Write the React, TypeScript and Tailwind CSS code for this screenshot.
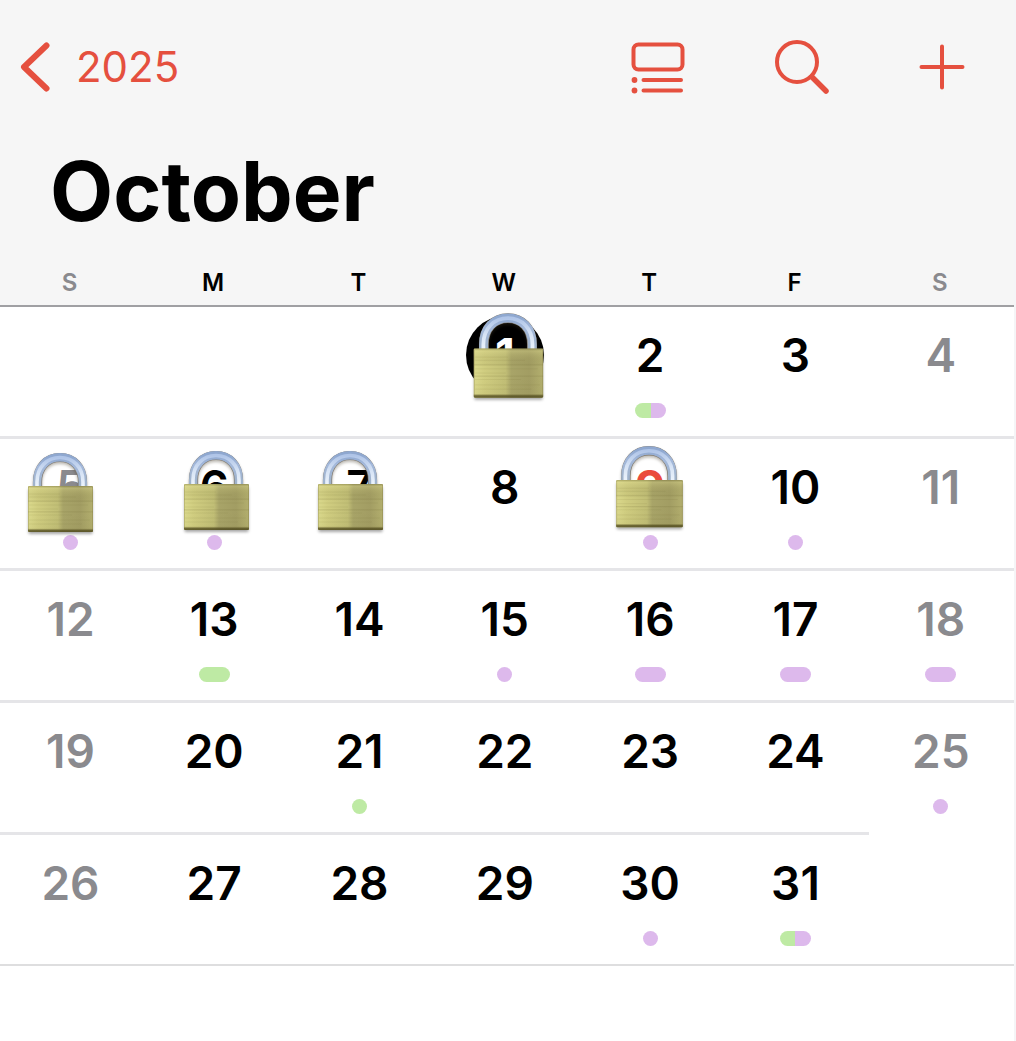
import { useId } from "react";

type Mark = "purple" | "green" | "purpleWide" | "greenWide" | "mixed";
type Day = { n: number; mark?: Mark; lock?: string; tone?: "selected" | "today" };

const weekdays = [
  { short: "S", name: "Sunday" },
  { short: "M", name: "Monday" },
  { short: "T", name: "Tuesday" },
  { short: "W", name: "Wednesday" },
  { short: "T", name: "Thursday" },
  { short: "F", name: "Friday" },
  { short: "S", name: "Saturday" },
];

const weeks: (Day | null)[][] = [
  [
    null,
    null,
    null,
    { n: 1, tone: "selected", lock: "top-[1px] ml-[4px] w-[79px]" },
    { n: 2, mark: "mixed" },
    { n: 3 },
    { n: 4 },
  ],
  [
    { n: 5, mark: "purple", lock: "top-[9px] ml-[-10px] w-[74px]" },
    { n: 6, mark: "purple", lock: "top-[7px] ml-[3px] w-[74px]" },
    { n: 7, lock: "top-[7px] ml-[-8px] w-[74px]" },
    { n: 8 },
    { n: 9, mark: "purple", tone: "today", lock: "top-[2px] w-[76px]" },
    { n: 10, mark: "purple" },
    { n: 11 },
  ],
  [
    { n: 12 },
    { n: 13, mark: "greenWide" },
    { n: 14 },
    { n: 15, mark: "purple" },
    { n: 16, mark: "purpleWide" },
    { n: 17, mark: "purpleWide" },
    { n: 18, mark: "purpleWide" },
  ],
  [
    { n: 19 },
    { n: 20 },
    { n: 21, mark: "green" },
    { n: 22 },
    { n: 23 },
    { n: 24 },
    { n: 25, mark: "purple" },
  ],
  [
    { n: 26 },
    { n: 27 },
    { n: 28 },
    { n: 29 },
    { n: 30, mark: "purple" },
    { n: 31, mark: "mixed" },
    null,
  ],
];

const markStyles: Record<Mark, string> = {
  purple: "w-[15px] bg-[#ddb9ec]",
  green: "w-[15px] bg-[#beeaa4]",
  purpleWide: "w-[31px] bg-[#ddb9ec]",
  greenWide: "w-[31px] bg-[#beeaa4]",
  mixed: "w-[31px] bg-linear-to-r from-[#beeaa4] from-50% to-[#ddb9ec] to-50%",
};

function Padlock({ className }: { className: string }) {
  const id = useId();
  const brass = id + "brass";
  const grain = id + "grain";
  const steel = id + "steel";
  const side = id + "side";
  const shadow = id + "shadow";
  const arch = "M13.500 40V34C13.500 19 23 9.500 36 9.500S58.500 19 58.500 34V40";
  return (
    <svg viewBox="0 0 74 90" aria-hidden="true" className={className}>
      <defs>
        <linearGradient id={brass} x1="0" x2="1" y1="0" y2="0">
          <stop offset="0" stopColor="#dbd98c" />
          <stop offset="0.15" stopColor="#d0cd80" />
          <stop offset="0.46" stopColor="#c1be76" />
          <stop offset="0.54" stopColor="#a8a468" />
          <stop offset="0.8" stopColor="#a29d63" />
          <stop offset="1" stopColor="#b3af6e" />
        </linearGradient>
        <linearGradient id={grain} x1="0" x2="0" y1="0" y2="1">
          <stop offset="0" stopColor="#6f6a35" stopOpacity="0.45" />
          <stop offset="0.05" stopColor="#e0dc93" stopOpacity="0.3" />
          <stop offset="0.3" stopColor="#77713a" stopOpacity="0.04" />
          <stop offset="0.33" stopColor="#77713a" stopOpacity="0.22" />
          <stop offset="0.36" stopColor="#77713a" stopOpacity="0" />
          <stop offset="0.54" stopColor="#77713a" stopOpacity="0" />
          <stop offset="0.56" stopColor="#77713a" stopOpacity="0.2" />
          <stop offset="0.59" stopColor="#77713a" stopOpacity="0" />
          <stop offset="0.92" stopColor="#77713a" stopOpacity="0.05" />
          <stop offset="0.96" stopColor="#565022" stopOpacity="0.8" />
          <stop offset="1" stopColor="#4d481f" stopOpacity="0.85" />
        </linearGradient>
        <linearGradient id={steel} x1="0" x2="0" y1="0" y2="1">
          <stop offset="0" stopColor="#8fa8d0" />
          <stop offset="0.3" stopColor="#a3b8da" />
          <stop offset="1" stopColor="#9fb2c8" />
        </linearGradient>
        <linearGradient id={side} x1="0" x2="0" y1="0" y2="1">
          <stop offset="0" stopColor="#b0c5e8" />
          <stop offset="0.5" stopColor="#d6e3f5" />
          <stop offset="1" stopColor="#eef5fc" />
        </linearGradient>
        <filter id={shadow} x="-20%" y="-20%" width="140%" height="150%">
          <feGaussianBlur stdDeviation="1.5" />
        </filter>
      </defs>
      <g filter={"url(#" + shadow + ")"} opacity="0.35">
        <rect x="4.5" y="41" width="64" height="45" rx="1" />
        <path d={arch} fill="none" stroke="#3e3623" strokeWidth="9" transform="translate(0 2)" />
      </g>
      <path d={arch} fill="none" stroke="#80796c" strokeWidth="9.200" />
      <path d="M13.200 40V34C13.200 19 23 9.300 36 9.300S58.800 19 58.800 34V40" fill="none" stroke={"url(#" + steel + ")"} strokeWidth="8.400" />
      <path d="M13 40V34C13 19 23 9.500 36 9.500S59 19 59 34V40" fill="none" stroke={"url(#" + side + ")"} strokeWidth="3.600" />
      <rect x="4" y="38" width="65" height="46" rx="1" fill={"url(#" + brass + ")"} />
      <rect x="4" y="38" width="65" height="46" rx="1" fill={"url(#" + grain + ")"} />
      <path d="M5 46H36M5 49H52M5 57H64M5 61H34M5 67H48M5 72H66M5 76H58" stroke="#716b34" strokeOpacity="0.12" strokeWidth="0.800" />
      <path d="M4.500 39V82M68.500 39V82" stroke="#77703b" strokeOpacity="0.300" />
    </svg>
  );
}

function DayCell({ day, weekend }: { day: Day; weekend: boolean }) {
  const tone =
    day.tone === "selected"
      ? "rounded-full bg-black font-bold text-white"
      : day.tone === "today"
        ? "font-bold text-[#ea4b3d]"
        : weekend
          ? "font-semibold text-[#8a8a8e]"
          : "font-semibold text-black";
  return (
    <button type="button" aria-label={"October " + day.n} className="relative flex h-full w-full flex-col items-center pt-[9px]">
      <span className={"flex size-[78px] shrink-0 items-center justify-center text-[46px] " + tone}>{day.n}</span>
      {day.mark && <span className={"mt-[9px] h-[15px] rounded-full " + markStyles[day.mark]} />}
      {day.lock && <Padlock className={"absolute left-1/2 -translate-x-1/2 " + day.lock} />}
    </button>
  );
}

export default function App() {
  return (
    <div className="min-h-screen border-r-2 border-[#f5f5f7] bg-white font-['Inter','Liberation_Sans',sans-serif]">
      <header className="bg-[#f6f6f6] pt-[39px]">
        <nav className="flex h-14 items-center justify-between pr-[49px] pl-5 text-[#e5503f]">
          <button type="button" className="flex items-center gap-[26px] text-[42px] leading-none">
            <svg viewBox="0 0 30 50" className="h-[50px] w-[30px]" fill="none" stroke="currentColor" strokeWidth="6" strokeLinecap="round" strokeLinejoin="round" aria-hidden="true">
              <path d="M26.500 3.500L4 25L26.500 46.500" />
            </svg>
            2025
          </button>
          <div className="flex items-center gap-[90px]">
            <button type="button" aria-label="List view">
              <svg viewBox="0 0 54 54" className="size-[54px]" fill="none" stroke="currentColor" strokeWidth="4" strokeLinecap="round" aria-hidden="true">
                <rect x="2.500" y="4.500" width="49" height="25" rx="5" />
                <path d="M12.500 40H50M12.500 50.500H50" />
                <circle cx="3.500" cy="40" r="2.900" fill="currentColor" stroke="none" />
                <circle cx="3.500" cy="50.500" r="2.900" fill="currentColor" stroke="none" />
              </svg>
            </button>
            <button type="button" aria-label="Search">
              <svg viewBox="0 0 54 54" className="size-[54px]" fill="none" stroke="currentColor" strokeLinecap="round" aria-hidden="true">
                <circle cx="22" cy="22" r="20" strokeWidth="4" />
                <path d="M37 37L51 51" strokeWidth="5.500" />
              </svg>
            </button>
            <button type="button" aria-label="Add event">
              <svg viewBox="0 0 46 46" className="size-[46px]" fill="none" stroke="currentColor" strokeWidth="4" strokeLinecap="round" aria-hidden="true">
                <path d="M23 2.500V43.500M2.500 23H43.500" />
              </svg>
            </button>
          </div>
        </nav>
        <h1 className="px-[50px] pt-[49px] pb-[26px] text-[82px] leading-[96px] font-bold text-black">October</h1>
      </header>
      <table className="w-full table-fixed border-separate border-spacing-0">
        <colgroup>
          <col className="w-[142px]" />
          <col span={6} />
        </colgroup>
        <thead>
          <tr className="bg-[#f6f6f6]">
            {weekdays.map((d, i) => (
              <th
                key={d.name}
                scope="col"
                aria-label={d.name}
                className={
                  "h-[41px] border-b-2 border-[#a0a0a3] p-0 pr-[3px] pb-[5px] text-2xl font-semibold " +
                  (i === 0 || i === 6 ? "text-[#8a8a8e]" : "text-black")
                }
              >
                {d.short}
              </th>
            ))}
          </tr>
        </thead>
        <tbody>
          {weeks.map((week, w) => (
            <tr key={w}>
              {week.map((day, i) => (
                <td
                  key={i}
                  className={
                    "p-0 pr-[1px] align-top " +
                    (w === 4
                      ? "h-[131px] border-b-2 border-[#dededf]"
                      : w === 3 && i === 6
                        ? "h-[132px] border-b-3 border-transparent"
                        : "h-[132px] border-b-3 border-[#e5e5e8]")
                  }
                >
                  {day && <DayCell day={day} weekend={i === 0 || i === 6} />}
                </td>
              ))}
            </tr>
          ))}
        </tbody>
      </table>
    </div>
  );
}
